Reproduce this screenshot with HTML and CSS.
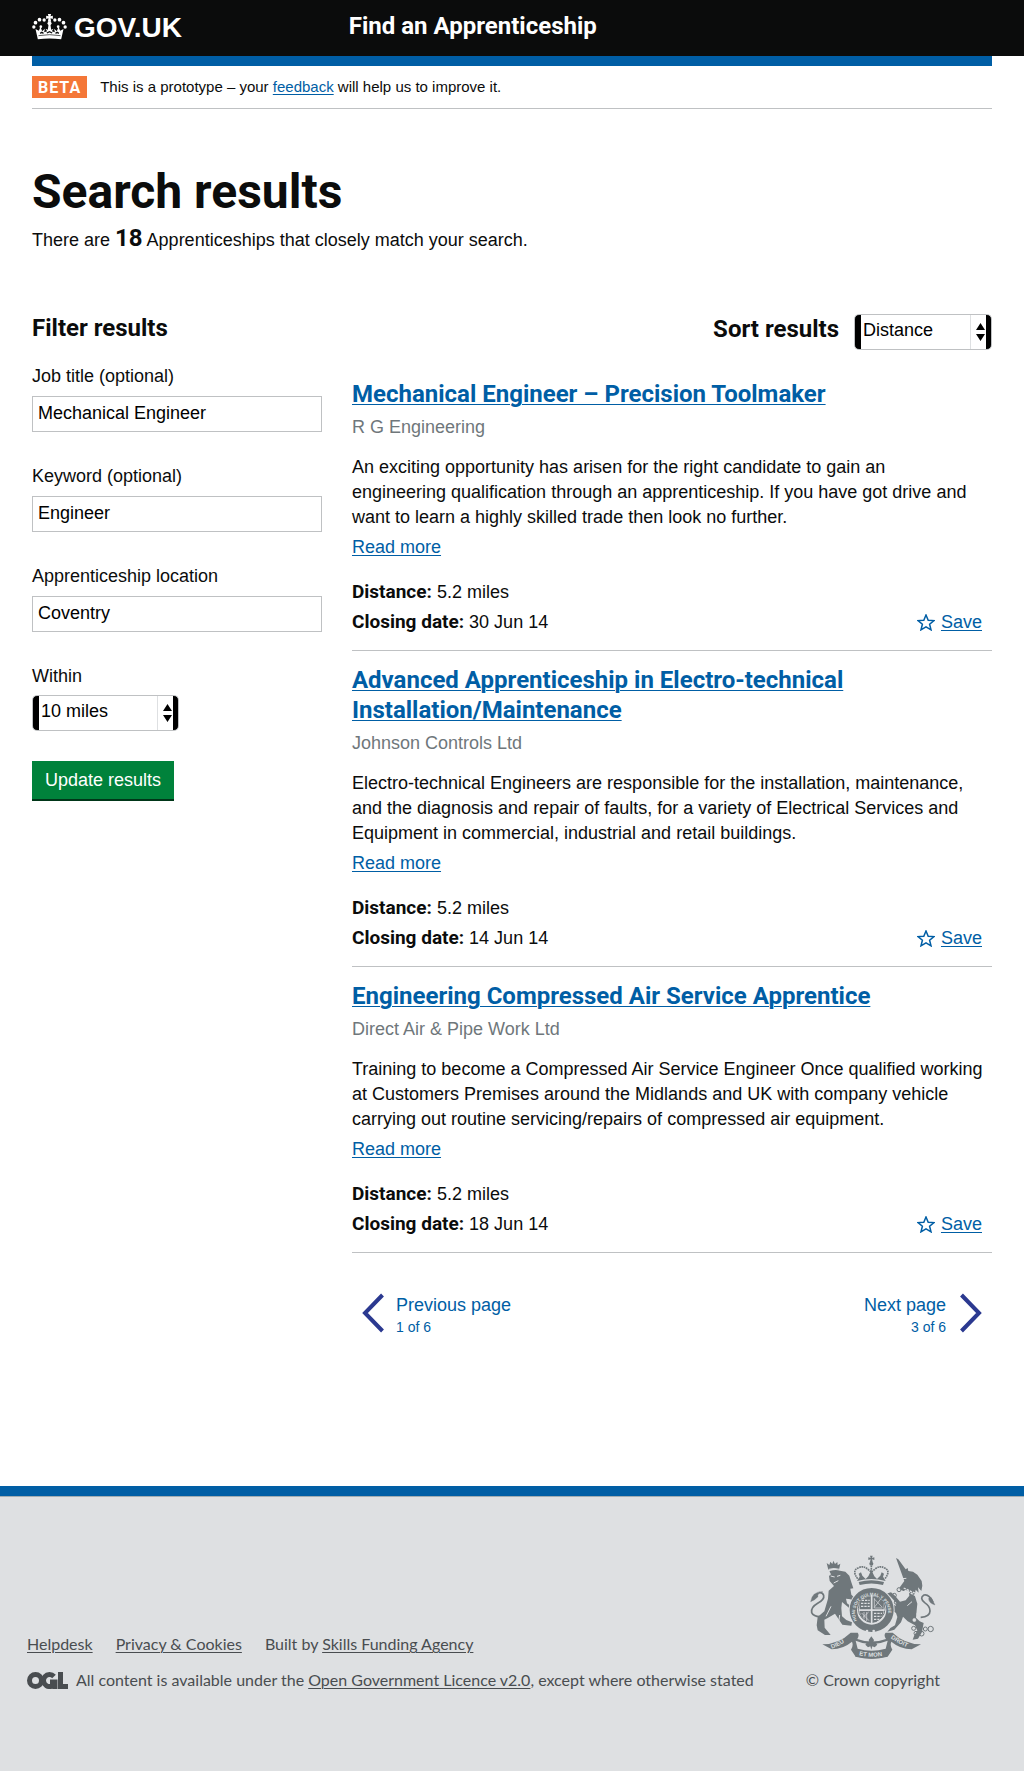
FILE: index.html
```html
<!DOCTYPE html>
<html lang="en">
<head>
<meta charset="utf-8">
<meta name="viewport" content="width=device-width, initial-scale=1">
<title>Search results - Find an Apprenticeship</title>
<link rel="stylesheet" href="styles.css">
</head>
<body>
<header class="site-header">
  <div class="container site-header-inner">
    <a class="logo" href="#">
      <svg class="crown" viewBox="0 0 104 78" aria-hidden="true">
        <g fill="#fff">
          <path d="M47 0h10l-2 7 7-2v10l-7-2 2 10h-10l2-10-7 2V5l7 2z"/>
          <circle cx="52" cy="28" r="6"/>
          <circle cx="36" cy="18" r="5"/><circle cx="68" cy="18" r="5"/>
          <circle cx="22" cy="17" r="5.500"/><circle cx="82" cy="17" r="5.500"/>
          <circle cx="10" cy="26" r="5.500"/><circle cx="94" cy="26" r="5.500"/>
          <circle cx="5" cy="39" r="5"/><circle cx="99" cy="39" r="5"/>
          <path d="M10 45l10 5 5-12 5 14 8-8-2 11 9-3-5-8 7 3 2-15h6l2 15 7-3-5 8 9 3-2-11 8 8 5-14 5 12 10-5-7 31q-35-5-70 0z"/>
          <circle cx="26" cy="38" r="4"/><circle cx="78" cy="38" r="4"/>
        </g>
        <path d="M19 65q33-6 66 0" fill="none" stroke="#0b0c0c" stroke-width="2"/>
        <path d="M24 58l5-3 5 3M70 58l5-3 5 3M44 57l8-4 8 4" fill="none" stroke="#0b0c0c" stroke-width="4"/>
      </svg>
      <span>GOV.UK</span>
    </a>
    <a class="service-name" href="#">Find an Apprenticeship</a>
  </div>
</header>

<main class="container">
  <div class="phase-banner">
    <strong class="phase-tag">BETA</strong>
    <span>This is a prototype – your <a href="#">feedback</a> will help us to improve it.</span>
  </div>

  <h1>Search results</h1>
  <p class="intro">There are <strong>18</strong> Apprenticeships that closely match your search.</p>

  <div class="columns">
    <form class="filters">
      <h2>Filter results</h2>
      <div class="field">
        <label for="job">Job title (optional)</label>
        <input id="job" type="text" value="Mechanical Engineer">
      </div>
      <div class="field">
        <label for="keyword">Keyword (optional)</label>
        <input id="keyword" type="text" value="Engineer">
      </div>
      <div class="field">
        <label for="location">Apprenticeship location</label>
        <input id="location" type="text" value="Coventry">
      </div>
      <div class="field field-select">
        <label for="within">Within</label>
        <span class="select select-within">
          <select id="within"><option>10 miles</option></select>
          <svg viewBox="0 0 9 18" aria-hidden="true"><path d="M4.500 0L9 7H0zM4.500 18L0 11h9z"/></svg>
        </span>
      </div>
      <button class="button" type="button">Update results</button>
    </form>

    <section class="results">
      <div class="sort">
        <label for="sort">Sort results</label>
        <span class="select select-sort">
          <select id="sort"><option>Distance</option></select>
          <svg viewBox="0 0 9 18" aria-hidden="true"><path d="M4.500 0L9 7H0zM4.500 18L0 11h9z"/></svg>
        </span>
      </div>

      <article class="result result-first">
        <h2><a href="#">Mechanical Engineer – Precision Toolmaker</a></h2>
        <p class="employer">R G Engineering</p>
        <p class="description">An exciting opportunity has arisen for the right candidate to gain an<br>engineering qualification through an apprenticeship. If you have got drive and want to learn a highly skilled trade then look no further.</p>
        <a class="more" href="#">Read more</a>
        <div class="meta">
          <div><p><b>Distance:</b> 5.2 miles</p><p><b>Closing date:</b> 30 Jun 14</p></div>
          <a class="save" href="#"><svg viewBox="0 0 18 17" aria-hidden="true"><path d="M9 1l2.200 5.200 5.800.400-4.400 3.700 1.400 5.500L9 12.800l-5 3 1.400-5.500L1 6.600l5.800-.4z"/></svg><span>Save</span></a>
        </div>
      </article>

      <article class="result">
        <h2><a href="#">Advanced Apprenticeship in Electro-technical Installation/Maintenance</a></h2>
        <p class="employer">Johnson Controls Ltd</p>
        <p class="description">Electro-technical Engineers are responsible for the installation, maintenance, and the diagnosis and repair of faults, for a variety of Electrical Services and Equipment in commercial, industrial and retail buildings.</p>
        <a class="more" href="#">Read more</a>
        <div class="meta">
          <div><p><b>Distance:</b> 5.2 miles</p><p><b>Closing date:</b> 14 Jun 14</p></div>
          <a class="save" href="#"><svg viewBox="0 0 18 17" aria-hidden="true"><path d="M9 1l2.200 5.200 5.800.400-4.400 3.700 1.400 5.500L9 12.800l-5 3 1.400-5.500L1 6.600l5.800-.4z"/></svg><span>Save</span></a>
        </div>
      </article>

      <article class="result">
        <h2><a href="#">Engineering Compressed Air Service Apprentice</a></h2>
        <p class="employer">Direct Air &amp; Pipe Work Ltd</p>
        <p class="description">Training to become a Compressed Air Service Engineer Once qualified working at Customers Premises around the Midlands and UK with company vehicle carrying out routine servicing/repairs of compressed air equipment.</p>
        <a class="more" href="#">Read more</a>
        <div class="meta">
          <div><p><b>Distance:</b> 5.2 miles</p><p><b>Closing date:</b> 18 Jun 14</p></div>
          <a class="save" href="#"><svg viewBox="0 0 18 17" aria-hidden="true"><path d="M9 1l2.200 5.200 5.800.400-4.400 3.700 1.400 5.500L9 12.800l-5 3 1.400-5.500L1 6.600l5.800-.4z"/></svg><span>Save</span></a>
        </div>
      </article>

      <nav class="pager" aria-label="Pages">
        <a href="#">
          <svg viewBox="0 0 22 40" aria-hidden="true"><path d="M20.500 2L3 20l17.500 18"/></svg>
          <span class="pager-text">Previous page<small>1 of 6</small></span>
        </a>
        <a class="next" href="#">
          <span class="pager-text">Next page<small>3 of 6</small></span>
          <svg viewBox="0 0 22 40" aria-hidden="true"><path d="M1.500 2L19 20 1.500 38"/></svg>
        </a>
      </nav>
    </section>
  </div>
</main>

<footer class="site-footer">
  <div class="site-footer-inner">
    <div class="footer-meta">
      <ul>
        <li><a href="#">Helpdesk</a></li>
        <li><a href="#">Privacy &amp; Cookies</a></li>
        <li>Built by <a href="#">Skills Funding Agency</a></li>
      </ul>
      <p class="licence">
        <svg class="ogl" viewBox="0 0 41 17" role="img" aria-label="OGL">
          <g fill="none" stroke="#494d50" stroke-width="5">
            <circle cx="8.500" cy="8.500" r="6"/>
            <path d="M27 4.500A6 6 0 1 0 28 11M28 17V10h-5"/>
            <path d="M33.500 0v14.500H41"/>
          </g>
        </svg>
        <span>All content is available under the <a href="#">Open Government Licence v2.0</a>, except where otherwise stated</span>
      </p>
    </div>
    <a class="copyright" href="#">
      <svg class="arms" viewBox="92 48 381 312" aria-hidden="true">
        <defs>
          <path id="garter" d="M236 244A50 50 0 1 1 324 244"/>
          <path id="motto-left" d="M160 329Q188 320 220 294"/>
          <path id="motto-mid" d="M242 349Q280 358 325 348"/>
          <path id="motto-right" d="M337 297Q364 318 402 330"/>
        </defs>
        <g fill="#6f777b">
          <!-- crown -->
          <path d="M275 50h8l-2 7 7-2v8l-7-2 2 8h-8l2-8-7 2v-8l7 2z"/>
          <circle cx="279" cy="74" r="6"/>
          <path d="M236 126l8-13-3-9 7-4 4 10 10 10 8-8 6-13h6l6 13 8 8 10-10 4-10 7 4-3 9 8 13q-43-12-86 0zM241 129q38-11 76 0l-3 9q-35-9-70 0z"/>
          <!-- lion with its crown -->
          <path d="M150 92l-5-20 8 6 3-10 6 7 3-10 5 10 7-6 1 10 8-5-4 18q-16-5-32 0z"/>
          <path d="M154 96q18-6 31-1l16 3 12 12 6 20 6 18-9 1 3 18 8 8 8 29-12-7-6-16-14-2 3 14 15 11 9 13-10-3-11-10-18-15-2 18 2 25 13 11 17 7-2 10-27-3-22-33-23 14-9 4 1 24 18 22h-17l-22-14-3-15 3-25 20-17 11-38 2-24 16-14-13-15-2-15 6-5-4-8z"/>
          <!-- unicorn -->
          <path d="M353 57l7 4 22 30 6-4 2 9 14 2 13 9 13 19 2 14-3 16-10-11 2 16-9-9-3 17 8 25-2 20-2 22 11 11 12 5-5 27-12 20-16 3 5-13 9-14-7-16-22-12-14-14-6 17-20 22-21 6 9-11 14-8 7-25-4-12-15-11-11-3 2-12 11-3 12 8 2-9-17-19-10-1-4-8 15-4 12 10 15 18 17-4 11-14-2-16-16 2-11-5 1-7 13-18z"/>
        </g>
        <g fill="none" stroke="#6f777b">
          <path d="M238 119q-18-24 1-32 16-9 31 5l9 7 9-7q15-14 31-5 19 8 1 32M279 80v35" stroke-width="5" stroke-dasharray="5 2"/>
          <path d="M136 232q-29 4-36-11-3-16 18-28 21-12 18-24-4-10-14-8" stroke-width="5"/>
          <path d="M97 188q4-31 36-30-18 6-14 15-9 10-22 15z" fill="#6f777b"/>
          <path d="M427 235q28-2 28-19 0-15-16-25-17-14-2-23 15-4 27 22" stroke-width="5"/>
          <path d="M470 198q-20-6-19-20l7-3z" fill="#6f777b"/>
          <!-- chain -->
          <g stroke-width="3">
            <circle cx="362" cy="152" r="6"/><circle cx="348" cy="169" r="6"/><circle cx="354" cy="190" r="6"/>
            <circle cx="406" cy="268" r="6"/><circle cx="413" cy="283" r="6"/><circle cx="430" cy="284" r="7"/><circle cx="441" cy="270" r="6"/><circle cx="457" cy="270" r="8"/>
          </g>
        </g>
        <g stroke="#dee0e2" fill="none">
          <path d="M151 91q16-5 33 0M157 111l12 3M176 112l10-3M166 132l14-7M158 202l-15 30M184 228l-3 22" stroke-width="3"/>
          <path d="M376 147l41 19M379 154l36 17" stroke-width="4" stroke-dasharray="7 3"/>
          <path d="M372 119l12-1M387 200l14-12" stroke-width="3"/>
          <circle cx="423" cy="205" r="5" fill="#dee0e2"/><circle cx="420" cy="225" r="5" fill="#dee0e2"/><circle cx="408" cy="243" r="5" fill="#dee0e2"/>
        </g>
        <!-- garter and shield -->
        <circle cx="280" cy="213" r="69" fill="#dee0e2"/>
        <circle cx="280" cy="213" r="55" fill="none" stroke="#6f777b" stroke-width="22"/>
        <circle cx="280" cy="209" r="40" fill="#dee0e2" stroke="#6f777b" stroke-width="3"/>
        <path d="M244 188q36-32 72 0v25h-72zM244 215h72q-2 31-36 37-34-6-36-37z" fill="#6f777b"/>
        <path d="M280 168v86M241 213h78" stroke="#dee0e2" stroke-width="5"/>
        <path d="M250 184h24M248 193h26M248 202h26M287 223h24M287 232h22M287 241h16" stroke="#dee0e2" stroke-width="4" stroke-dasharray="7 3"/>
        <path d="M288 180l24 25M307 180l-19 25M288 177v30h24M250 222l22 23M257 219v22M265 219v28M271 219l-18 17" fill="none" stroke="#dee0e2" stroke-width="2"/>
        <circle cx="266" cy="276" r="4" fill="#dee0e2"/><circle cx="286" cy="276" r="4" fill="#dee0e2"/>
        <text class="arms-text garter-text"><textPath href="#garter">HONI SOIT QUI MAL Y PENSE</textPath></text>
        <!-- motto scroll -->
        <path d="M132 316q50-1 85-35h21q6 7-1 19 43 15 86 0-8-12-1-19h21q35 34 85 35l-28 15q-35-1-61-23-5 12 3 24l-13 20q-49 14-98 0l-13-20q8-12 3-24-26 22-61 23z" fill="#6f777b"/>
        <path d="M232 305q47 21 96 0l-6 24q-42 12-84 0z" fill="#dee0e2"/>
        <path d="M279 292l8 11-4 12 8-6 6 8-8 8-7-3-3 10-3-10-7 3-8-8 6-8 8 6-4-12z" fill="#6f777b"/>
        <path d="M229 329q50 16 101 0l-2 24q-48 12-97 0z" fill="#6f777b"/>
        <text class="arms-text"><textPath href="#motto-left">DIEU</textPath></text>
        <text class="arms-text"><textPath href="#motto-mid">ET MON</textPath></text>
        <text class="arms-text"><textPath href="#motto-right">DROIT</textPath></text>
      </svg>
      <span>© Crown copyright</span>
    </a>
  </div>
</footer>
</body>
</html>
```
FILE: styles.css
```css
* { box-sizing: border-box; }

:root {
  --text: #0b0c0c;
  --link: #005ea5;
  --border: #bfc1c3;
  --muted: #6f777b;
  --body-font: "Liberation Sans", Arial, sans-serif;
  --bold-font: Roboto, "Liberation Sans", sans-serif;
}

body {
  margin: 0;
  background: #fff;
  color: var(--text);
  font: 18px/25px var(--body-font);
}

h1, h2, p, ul { margin: 0; padding: 0; }
h1, h2, b, strong { font-family: var(--bold-font); font-weight: 700; }
h2 { font-size: 24px; line-height: 30px; }
a { color: var(--link); text-underline-offset: 2px; text-decoration-thickness: 1px; }
input, select, button { font: inherit; color: #000; }

.container {
  max-width: 960px;
  margin: 0 auto;
}

@media (max-width: 1023px) {
  .container { margin: 0 32px; }
}

/* Header */
.site-header { background: var(--text); }
.site-header-inner {
  display: flex;
  min-height: 56px;
}
.logo, .service-name { color: #fff; text-decoration: none; font-weight: 700; }
.logo {
  display: flex;
  gap: 7px;
  width: 33%;
  padding-top: 14px;
  font-size: 28px;
  line-height: 28px;
}
.crown { width: 35px; height: 26px; }
.service-name {
  padding-top: 11px;
  font-family: var(--bold-font);
  font-size: 24px;
  line-height: 30px;
}

/* Beta banner */
.phase-banner {
  display: flex;
  align-items: center;
  gap: 13px;
  border-top: 10px solid var(--link);
  border-bottom: 1px solid var(--border);
  padding: 10px 0;
  font-size: 15px;
  line-height: 20px;
}
.phase-tag {
  padding: 1px 6px 0;
  background: #f47738;
  color: #fff;
  font-size: 16px;
  line-height: 21px;
  letter-spacing: 1px;
}

h1 {
  margin: 58px 0 9px;
  font-size: 48px;
  line-height: 50px;
}
.intro strong { font-size: 24px; line-height: 24px; }

.columns {
  display: flex;
  margin-top: 60px;
}

/* Filters */
.filters {
  flex: none;
  width: 33.3333%;
  padding-right: 30px;
}
.filters h2 { margin-bottom: 21px; }
.field {
  display: flex;
  flex-direction: column;
  align-items: flex-start;
  gap: 7px;
  margin-bottom: 32px;
}
.field-select { gap: 6px; margin-bottom: 30px; }
.field input {
  width: 100%;
  height: 36px;
  padding: 0 5px 2px;
  border: 1px solid var(--border);
}
.select { position: relative; display: block; }
.select-within { width: 147px; }
.select-sort { width: 138px; }
.select select {
  display: block;
  width: 100%;
  height: 36px;
  padding: 0 8px 4px;
  appearance: none;
  border: 1px solid var(--border);
  border-radius: 5px;
  background:
    linear-gradient(#000, #000) left / 6px 100% no-repeat,
    linear-gradient(#000, #000) right / 5px 100% no-repeat,
    linear-gradient(#dee0e2, #dee0e2) right 20px top / 1px 100% no-repeat,
    #fff;
}
.select svg {
  position: absolute;
  top: 9px;
  right: 7px;
  width: 9px;
  height: 18px;
  pointer-events: none;
}
.button {
  height: 40px;
  padding: 0 13px 2px;
  border: 0;
  background: #00823b;
  box-shadow: inset 0 -2px #003618;
  color: #fff;
}

/* Results */
.results { flex: 1; padding-top: 1px; }
.sort {
  display: flex;
  justify-content: flex-end;
  gap: 15px;
}
.sort label {
  font: 700 24px/30px var(--bold-font);
}
.result {
  padding: 14px 0 13px;
  border-bottom: 1px solid var(--border);
}
.result-first { padding-top: 29px; }
.employer { margin: 6px 0 15px; color: var(--muted); }
.more { display: inline-block; margin-top: 5px; }
.meta {
  display: flex;
  justify-content: space-between;
  align-items: flex-end;
  margin-top: 17px;
  padding-right: 10px;
  line-height: 30px;
}
.meta b { font-size: 19px; line-height: 24px; }
.save {
  display: flex;
  align-items: center;
  gap: 6px;
  text-decoration: none;
}
.save span { text-decoration: underline; text-decoration-thickness: 1px; }
.save svg {
  width: 18px;
  height: 17px;
  fill: none;
  stroke: var(--link);
  stroke-width: 1.5;
}

.pager {
  display: flex;
  justify-content: space-between;
  margin-top: 40px;
  padding: 0 10px;
}
.pager a {
  display: flex;
  gap: 12px;
  text-decoration: none;
}
.pager .next { gap: 14px; text-align: right; }
.pager svg {
  width: 22px;
  height: 40px;
  fill: none;
  stroke: #2b3990;
  stroke-width: 4;
}
.pager small { display: block; font-size: 14px; line-height: 18px; }

/* Footer */
.site-footer {
  margin-top: 150px;
  border-top: 10px solid var(--link);
  background: #dee0e2;
  box-shadow: inset 0 1px #a1acb2;
  color: #494d50;
  font: 16px/20px Lato, "Liberation Sans", sans-serif;
}
.site-footer a { color: inherit; }
.site-footer-inner {
  display: flex;
  justify-content: space-between;
  align-items: flex-end;
  max-width: 970px;
  margin: 0 auto;
  padding: 59px 57px 81px 0;
}
.footer-meta ul {
  display: flex;
  gap: 23px;
  margin-bottom: 16px;
  list-style: none;
}
.licence { display: flex; align-items: center; gap: 8px; }
.ogl { flex: none; width: 41px; height: 17px; }
.site-footer .copyright {
  display: flex;
  flex-direction: column;
  align-items: center;
  gap: 11px;
  text-decoration: none;
}
.arms { width: 127px; height: 104px; }
.arms-text {
  fill: #dee0e2;
  font: 700 18px var(--body-font);
}
.garter-text { font-size: 13px; }
```
